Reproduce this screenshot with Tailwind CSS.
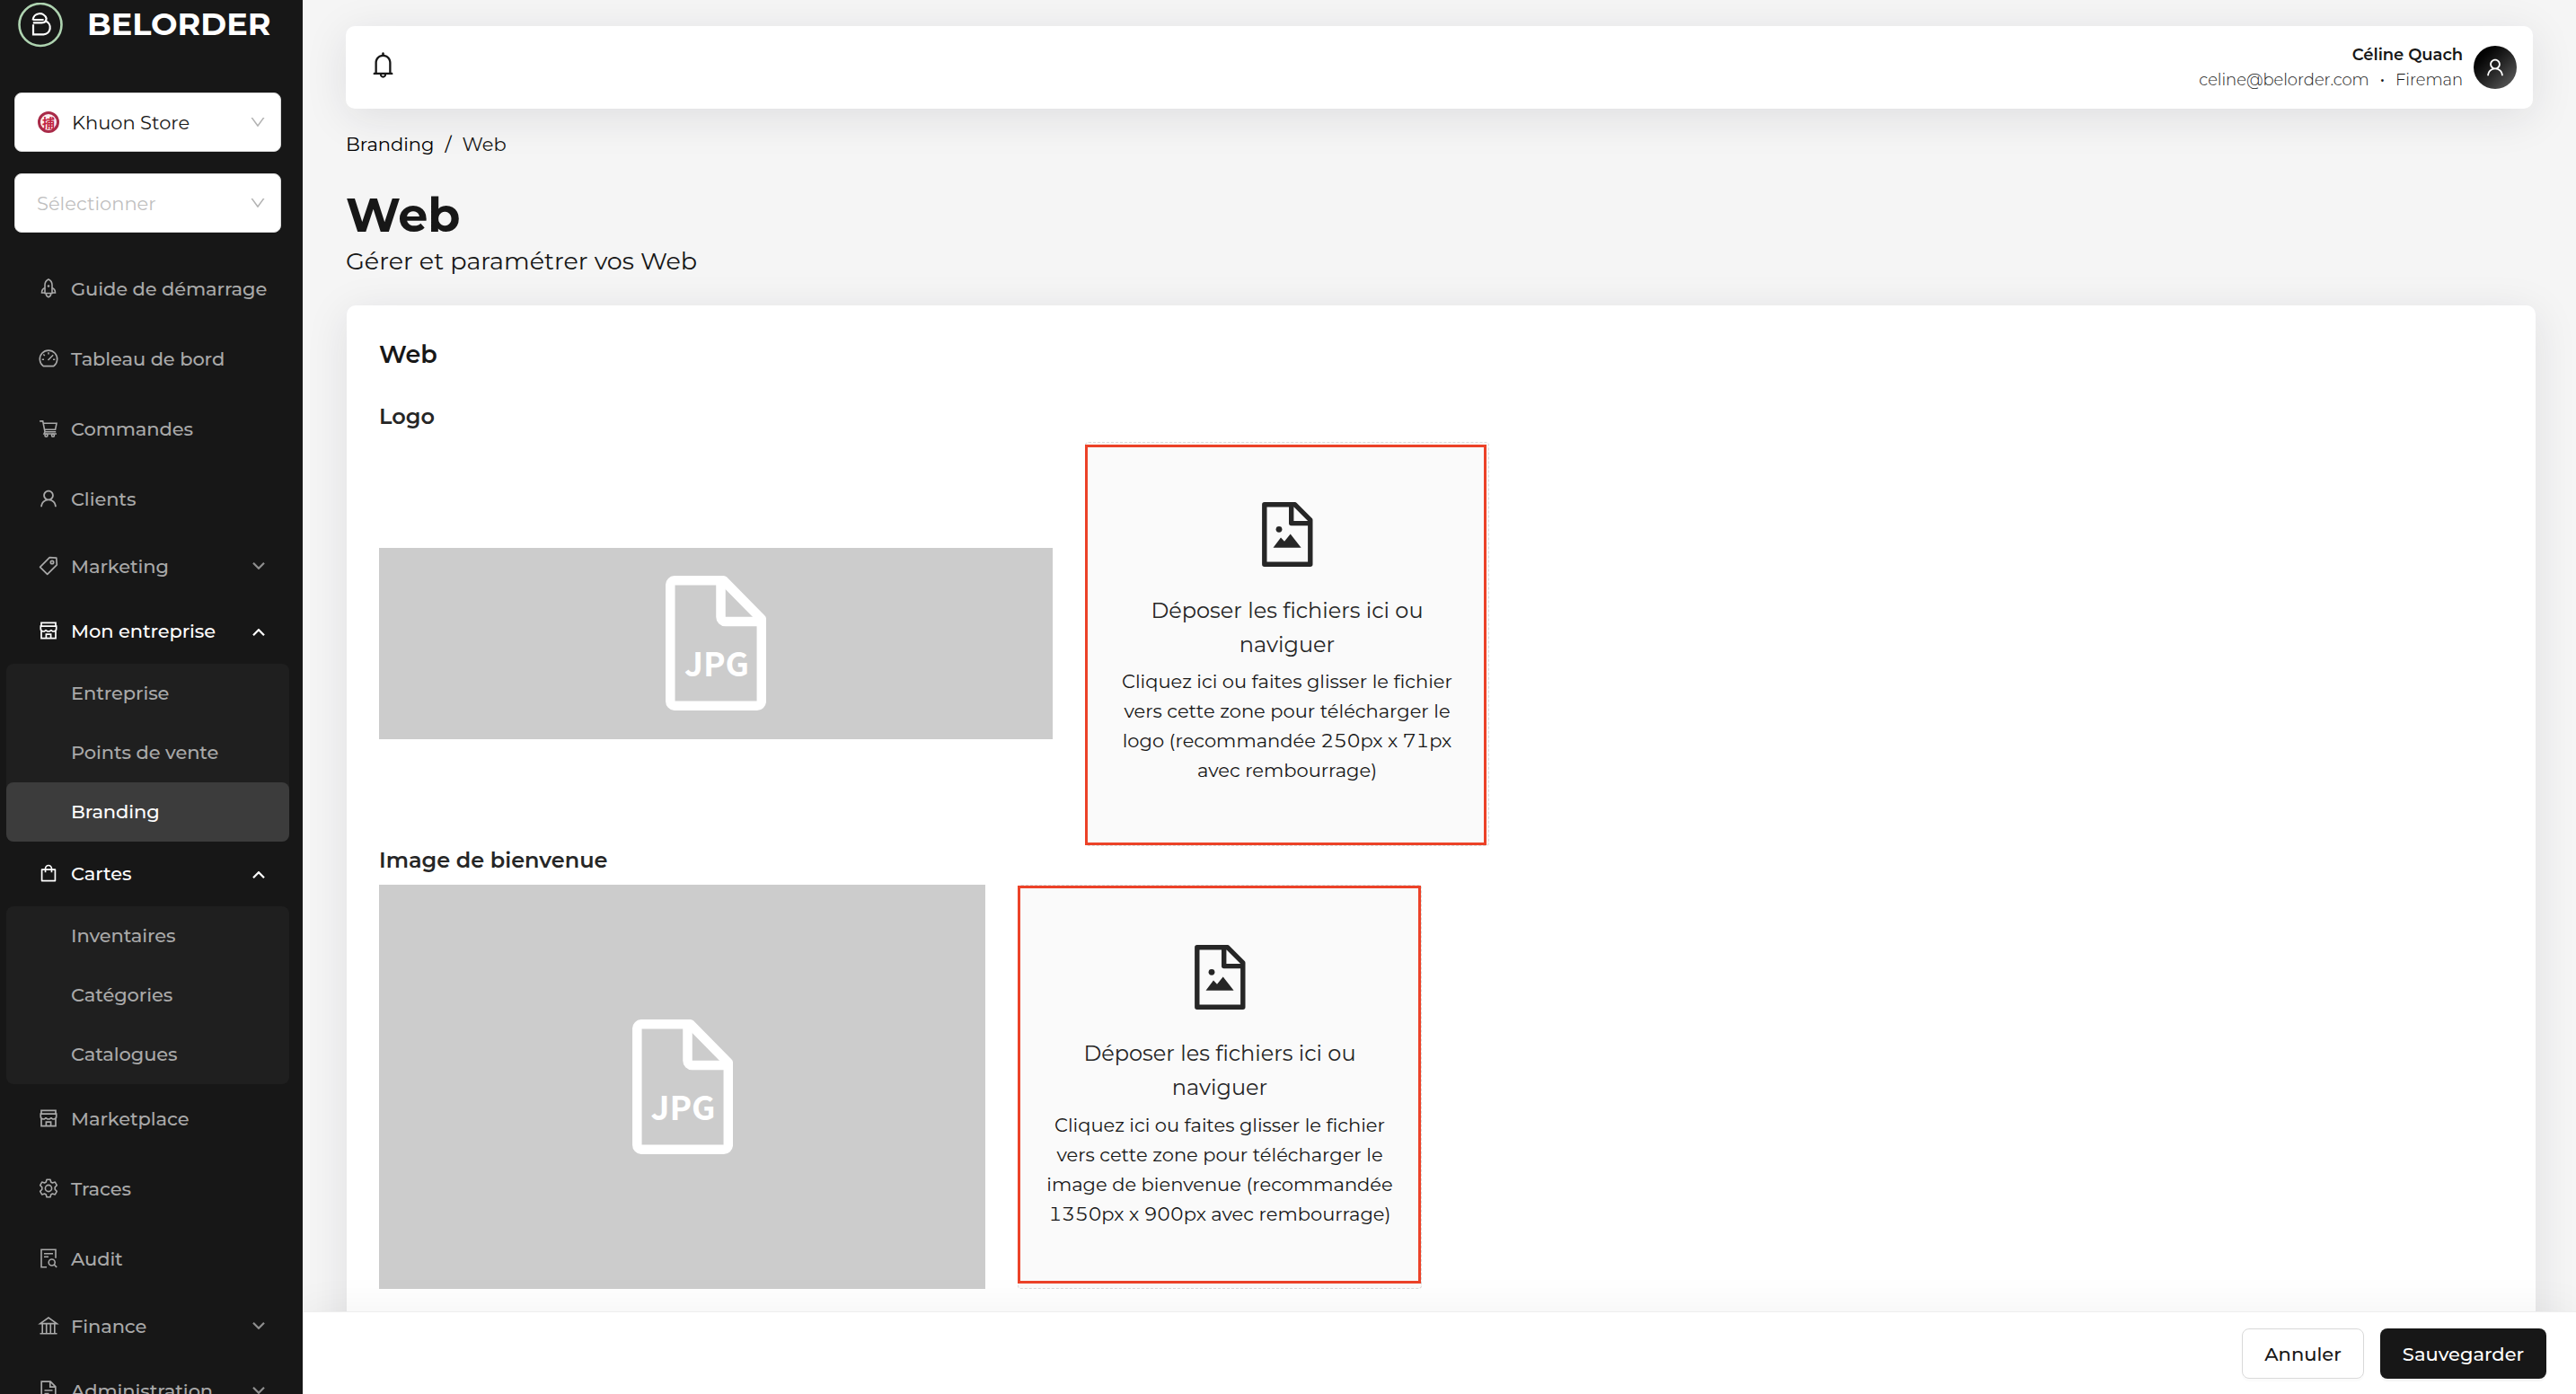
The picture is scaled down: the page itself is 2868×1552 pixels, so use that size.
<!DOCTYPE html>
<html lang="fr">
<head>
  <meta charset="UTF-8" />
  <meta name="viewport" content="width=device-width, initial-scale=1.0"/>
  <title>Belorder - Branding Web</title>
  <script src="https://cdn.jsdelivr.net/npm/@tailwindcss/browser@4"></script>
</head>
<body class="flex h-screen overflow-hidden bg-[#f5f5f5] font-['Montserrat','Inter',sans-serif] text-[21px] leading-[33px] text-[#171717] tabular-nums">

  <!-- Icons -->
  <svg class="hidden">
    <symbol id="i-user" viewBox="0 0 1024 1024"><path fill="currentColor" d="M858.5 763.6a374 374 0 00-80.6-119.5 375.63 375.63 0 00-119.5-80.6c-.4-.2-.8-.3-1.2-.5C719.5 518 760 444.7 760 362c0-137-111-248-248-248S264 225 264 362c0 82.7 40.5 156 102.8 201.1-.4.2-.8.3-1.2.5-44.8 18.9-85 46-119.5 80.6a375.63 375.63 0 00-80.6 119.5A371.7 371.7 0 00136 901.8a8 8 0 008 8.2h60c4.4 0 7.9-3.5 8-7.8 2-77.2 33-149.5 87.8-204.3 56.7-56.7 132-87.9 212.2-87.9s155.5 31.2 212.2 87.9C779 752.7 810 825 812 902.2c.1 4.4 3.6 7.8 8 7.8h60a8 8 0 008-8.2c-1-47.8-10.9-94.3-29.5-138.2zM512 534c-45.9 0-89.1-17.9-121.6-50.4S340 407.9 340 362c0-45.9 17.9-89.1 50.4-121.6S466.1 190 512 190s89.1 17.9 121.6 50.4S684 316.1 684 362c0 45.9-17.9 89.1-50.4 121.6S557.9 534 512 534z"/></symbol>
    <symbol id="i-down" viewBox="0 0 1024 1024"><path fill="currentColor" d="M884 256h-75c-5.1 0-9.9 2.5-12.9 6.6L512 654.2 227.9 262.6c-3-4.1-7.8-6.6-12.9-6.6h-75c-6.5 0-10.3 7.4-6.5 12.7l352.6 486.1c12.8 17.6 39 17.6 51.7 0l352.6-486.1c3.9-5.3.1-12.7-6.4-12.7z"/></symbol>
    <symbol id="i-bell" viewBox="0 0 1024 1024"><path fill="currentColor" d="M816 768h-24V428c0-141.1-104.3-257.7-240-277.1V112c0-22.1-17.9-40-40-40s-40 17.9-40 40v38.9c-135.7 19.4-240 136-240 277.1v340h-24c-17.7 0-32 14.3-32 32v32c0 4.4 3.6 8 8 8h216c0 61.8 50.2 112 112 112s112-50.2 112-112h216c4.4 0 8-3.6 8-8v-32c0-17.7-14.3-32-32-32zM512 888c-26.5 0-48-21.5-48-48h96c0 26.5-21.5 48-48 48zM304 768V428c0-55.6 21.6-107.8 60.9-147.1S456.4 220 512 220c55.6 0 107.8 21.6 147.1 60.9S720 372.4 720 428v340H304z"/></symbol>
    <symbol id="i-bag" viewBox="0 0 1024 1024"><path fill="currentColor" d="M832 312H696v-16c0-101.6-82.4-184-184-184s-184 82.4-184 184v16H192c-17.7 0-32 14.3-32 32v536c0 17.7 14.3 32 32 32h640c17.7 0 32-14.3 32-32V344c0-17.7-14.3-32-32-32zm-432-16c0-61.9 50.1-112 112-112s112 50.1 112 112v16H400v-16zm392 544H232V384h96v88c0 4.4 3.6 8 8 8h56c4.4 0 8-3.6 8-8v-88h224v88c0 4.4 3.6 8 8 8h56c4.4 0 8-3.6 8-8v-88h96v456z"/></symbol>
    <symbol id="i-rocket" viewBox="0 0 24 24"><g fill="none" stroke="currentColor" stroke-width="1.6"><path d="M8 17.5V8.2C8 5.4 9.6 3.2 12 2c2.4 1.2 4 3.4 4 6.2v9.3z"/><path d="M8 11.5c-2.2.8-3.5 2.8-3.5 5.5H8M16 11.5c2.2.8 3.5 2.8 3.5 5.5H16"/><path d="M9.2 17.5c0 2 1 3.6 2.8 4.3 1.8-.7 2.8-2.3 2.8-4.3"/></g><circle cx="12" cy="9.5" r="1.3" fill="currentColor"/></symbol>
    <symbol id="i-dash" viewBox="0 0 24 24"><g fill="none" stroke="currentColor" stroke-width="1.6"><path d="M6.2 20.6a9.7 9.7 0 1 1 11.6 0z" stroke-linejoin="round"/><path d="M12 5.2v2.4M6.3 7.5l1.5 1.5M4.7 13.2H7M17 13.2h2.3M11.500 14l5.700-5.700" stroke-width="1.5"/></g></symbol>
    <symbol id="i-cart" viewBox="0 0 24 24"><g fill="none" stroke="currentColor" stroke-width="1.6"><path d="M2.2 3.900h3.500l2.300 11.800h12.200M6.400 6.300h14.600l-1.400 7H7.600M8 15.700l-1 2.300h14"/><circle cx="9.500" cy="19.800" r="1.500"/><circle cx="17" cy="19.800" r="1.500"/></g></symbol>
    <symbol id="i-tag" viewBox="0 0 24 24"><g fill="none" stroke="currentColor" stroke-width="1.7"><path d="M2.600 13.300 13.200 2.700l7.600.5.500 7.600L10.700 21.400z" stroke-linejoin="round"/><circle cx="16" cy="8" r="1.700"/></g></symbol>
    <symbol id="i-shop" viewBox="0 0 24 24"><g fill="none" stroke="currentColor" stroke-width="1.7"><path d="M4 12.500v8.200h16v-8.200M4 7.500V3.400h16v4.100"/><path d="M3.300 7.200h17.400v2.900c0 1.700-1.300 2.900-2.900 2.900s-2.900-1.200-2.900-2c0 .8-1.300 2-2.900 2s-2.900-1.200-2.900-2c0 .8-1.300 2-2.900 2s-2.900-1.200-2.900-2.900z"/><path d="M9.400 20.700v-4.500h5.200v4.500"/></g></symbol>
    <symbol id="i-gear" viewBox="0 0 24 24"><g fill="none" stroke="currentColor" stroke-width="1.6"><path stroke-linejoin="round" d="M10 2.200h4l.7 2.800 1.700 1 2.900-.9 2 3.500-2.100 2.100v2.600l2.100 2.100-2 3.500-2.900-.9-1.700 1-.7 2.800h-4l-.7-2.800-1.700-1-2.900.9-2-3.500 2.100-2.100v-2.600L2.700 8.600l2-3.500 2.900.9 1.700-1z"/><circle cx="12" cy="12" r="3.600"/></g></symbol>
    <symbol id="i-audit" viewBox="0 0 24 24"><g fill="none" stroke="currentColor" stroke-width="1.6"><path d="M10 21.800H4V2.200h16v9.600M7 6.800h10M7 10.200h5"/><circle cx="15.700" cy="16.500" r="3.500"/><path d="m18.200 19 3 2.800"/></g></symbol>
    <symbol id="i-bank" viewBox="0 0 24 24"><g fill="none" stroke="currentColor" stroke-width="1.6"><path d="M2.700 9.600 12 3l9.300 6.600zM2.500 20.700h19M5.200 9.600v11M9.700 9.600v11M14.300 9.600v11M18.800 9.600v11"/></g></symbol>
    <symbol id="i-file" viewBox="0 0 24 24"><g fill="none" stroke="currentColor" stroke-width="1.7"><path d="M4.200 22V2.200h10l5.600 5.600V22zM13.800 2.500v5.700h5.700M7.500 12h9M7.500 15.500h5"/></g></symbol>
    <symbol id="i-image" viewBox="0 0 57 72"><g fill="none" stroke="currentColor" stroke-width="5.4" stroke-linejoin="round"><path d="M2.800 2.800h34L53.800 19.900v49.300H2.800z"/><path d="M32.700 3v20.600h21"/></g><g fill="currentColor"><circle cx="19" cy="30.300" r="3.400"/><path d="M12.500 50.800 21 39.500l4 4.300 6.700-8.300 11.900 15.300z"/></g></symbol>
    <symbol id="i-doc" viewBox="0 0 112 150"><g fill="none" stroke="#fff" stroke-width="10.5" stroke-linejoin="round"><path d="M10 5.300h54.500l42.300 43V140a5 5 0 0 1-5 4.700H10a5 5 0 0 1-4.700-5V10a5 5 0 0 1 4.700-4.700z"/><path d="M61.500 6v40a5 5 0 0 0 5 5h40"/></g></symbol>
  </svg>

  <!-- Sidebar -->
  <aside class="flex h-screen w-[337px] shrink-0 flex-col overflow-hidden bg-[#171717] text-[#a9a9a9]">
    <div class="flex h-[55px] shrink-0 items-center gap-[27px] pl-5 text-white">
      <svg class="size-[50px]" viewBox="0 0 50 50" fill="none">
        <circle cx="25" cy="24.500" r="23.500" stroke="#aed3b0" stroke-width="2.600"/>
        <path d="M16.600 19.400A7.700 7.700 0 0 1 31.600 17.500c0 3.500-2.300 4.800-5.200 4.800h-9.600M16.600 19h12M17 24.200v11.200h11.500a7.700 7.700 0 0 0 2.500-14.800" stroke="#fff" stroke-width="2.200"/>
      </svg>
      <span class="pb-[2px] text-[35px] font-bold">BELORDER</span>
    </div>

    <div class="mr-6 ml-4 mt-12 flex h-[66px] shrink-0 items-center rounded-lg border border-[#d9d9d9] bg-white pr-[15px] pl-[25px] text-[#171717]">
      <span class="mr-[14px] flex size-6 items-center justify-center rounded-full border-[3px] border-[#a92a48] bg-[#fbeef0] font-['Noto_Sans_CJK_TC',sans-serif] text-[14px] leading-none font-bold text-[#c21f3f]">捕</span>
      <span class="flex-1">Khuon Store</span>
      <svg class="size-5 text-black/30"><use href="#i-down"/></svg>
    </div>
    <div class="mr-6 ml-4 mt-6 flex h-[66px] shrink-0 items-center rounded-lg border border-[#d9d9d9] bg-white pr-[15px] pl-6 text-[#bfbfbf]">
      <span class="flex-1">Sélectionner</span>
      <svg class="size-5 text-black/30"><use href="#i-down"/></svg>
    </div>

    <nav class="mt-6 font-medium tracking-[-0.1px]">
      <a class="flex h-[78px] items-center gap-[13px] pb-[2px] pl-[42px]"><svg class="size-6"><use href="#i-rocket"/></svg>Guide de démarrage</a>
      <a class="flex h-[78px] items-center gap-[13px] pb-[2px] pl-[42px]"><svg class="size-6"><use href="#i-dash"/></svg>Tableau de bord</a>
      <a class="flex h-[78px] items-center gap-[13px] pb-[2px] pl-[42px]"><svg class="size-6"><use href="#i-cart"/></svg>Commandes</a>
      <a class="flex h-[78px] items-center gap-[13px] pb-[2px] pl-[42px]"><svg class="size-6"><use href="#i-user"/></svg>Clients</a>
      <a class="flex h-[72px] items-center gap-[13px] pr-[42px] pb-[2px] pl-[42px]"><svg class="size-6"><use href="#i-tag"/></svg><span class="flex-1">Marketing</span>
        <svg class="h-2 w-[14px]" viewBox="0 0 14 8" fill="none" stroke="#8f8f8f" stroke-width="2.2"><path d="m1 .8 6 6 6-6"/></svg></a>
      <a class="flex h-[72px] items-center gap-[13px] pr-[42px] pb-[2px] pl-[42px] text-white"><svg class="size-6"><use href="#i-shop"/></svg><span class="flex-1">Mon entreprise</span>
        <svg class="mt-1 h-2 w-[14px]" viewBox="0 0 14 8" fill="none" stroke="#fff" stroke-width="2.2"><path d="m1 7.200 6-6 6 6"/></svg></a>
      <div class="mr-[15px] ml-[7px] rounded-lg bg-[#1f1f1f]">
        <a class="flex h-[66px] items-center pb-[2px] pl-[72px]">Entreprise</a>
        <a class="flex h-[66px] items-center pb-[2px] pl-[72px]">Points de vente</a>
        <a class="flex h-[66px] items-center rounded-lg bg-[#3c3c3c] pb-[2px] pl-[72px] text-white">Branding</a>
      </div>
      <a class="flex h-[72px] items-center gap-[13px] pr-[42px] pb-[2px] pl-[42px] text-white"><svg class="size-6"><use href="#i-bag"/></svg><span class="flex-1">Cartes</span>
        <svg class="mt-1 h-2 w-[14px]" viewBox="0 0 14 8" fill="none" stroke="#fff" stroke-width="2.2"><path d="m1 7.200 6-6 6 6"/></svg></a>
      <div class="mr-[15px] ml-[7px] rounded-lg bg-[#1f1f1f]">
        <a class="flex h-[66px] items-center pb-[2px] pl-[72px]">Inventaires</a>
        <a class="flex h-[66px] items-center pb-[2px] pl-[72px]">Catégories</a>
        <a class="flex h-[66px] items-center pb-[2px] pl-[72px]">Catalogues</a>
      </div>
      <a class="flex h-[78px] items-center gap-[13px] pb-[2px] pl-[42px]"><svg class="size-6"><use href="#i-shop"/></svg>Marketplace</a>
      <a class="flex h-[78px] items-center gap-[13px] pb-[2px] pl-[42px]"><svg class="size-6"><use href="#i-gear"/></svg>Traces</a>
      <a class="flex h-[78px] items-center gap-[13px] pb-[2px] pl-[42px]"><svg class="size-6"><use href="#i-audit"/></svg>Audit</a>
      <a class="flex h-[72px] items-center gap-[13px] pr-[42px] pb-[2px] pl-[42px]"><svg class="size-6"><use href="#i-bank"/></svg><span class="flex-1">Finance</span>
        <svg class="h-2 w-[14px]" viewBox="0 0 14 8" fill="none" stroke="#8f8f8f" stroke-width="2.2"><path d="m1 .8 6 6 6-6"/></svg></a>
      <a class="flex h-[72px] items-center gap-[13px] pr-[42px] pb-[2px] pl-[42px]"><svg class="size-6"><use href="#i-file"/></svg><span class="flex-1">Administration</span>
        <svg class="h-2 w-[14px]" viewBox="0 0 14 8" fill="none" stroke="#8f8f8f" stroke-width="2.2"><path d="m1 .8 6 6 6-6"/></svg></a>
    </nav>
  </aside>

  <!-- Page -->
  <div class="flex min-w-0 flex-1 flex-col overflow-hidden">
    <main class="min-h-0 flex-1 overflow-hidden pt-[29px]">
      <header class="mr-12 ml-12 flex h-[92px] items-center justify-between rounded-[10px] bg-white pr-[18px] pl-[25px] shadow-[0_9px_48px_rgba(30,30,50,0.1)]">
        <svg class="size-[33px] -translate-y-[3px]"><use href="#i-bell"/></svg>
        <div class="flex items-center gap-3">
          <div class="text-right text-[18px] leading-7 tracking-[-0.05px]">
            <p class="font-semibold">Céline Quach</p>
            <p class="flex justify-end font-light"><span>celine@belorder.com</span><span class="mx-[12px] font-normal">•</span><span>Fireman</span></p>
          </div>
          <span class="flex size-12 items-center justify-center rounded-full bg-linear-to-br from-black to-[#666] text-white"><svg class="size-6"><use href="#i-user"/></svg></span>
        </div>
      </header>

      <div class="mt-[23px] ml-12 flex text-black"><span>Branding</span><span class="mx-3">/</span><span class="text-[#171717]">Web</span></div>
      <h1 class="mt-[30px] ml-12 text-[52.5px] leading-[64px] font-bold">Web</h1>
      <p class="-mt-px ml-12 text-[27px] leading-[42px]">Gérer et paramétrer vos Web</p>

      <section class="mt-7 mr-[45px] ml-[49px] h-[1300px] rounded-[10px] bg-white px-9 pt-[34px] shadow-[0_9px_48px_rgba(30,30,50,0.1)]">
        <h2 class="text-[27px] leading-[42px] font-semibold">Web</h2>
        <h3 class="mt-[29px] text-[24px] leading-[38px] font-semibold text-[#262626]">Logo</h3>
        <div class="mt-[9px] flex items-center gap-9">
          <div class="mb-[2px] flex h-[213px] w-[750px] items-center justify-center bg-[#ccc]">
            <div class="relative h-[150px] w-[112px]">
              <svg class="size-full"><use href="#i-doc"/></svg>
              <span class="absolute top-[76px] left-px w-full text-center font-['Noto_Sans_CJK_SC',sans-serif] text-[37px] leading-[40px] font-bold text-white">JPG</span>
            </div>
          </div>
          <div class="relative flex size-[450px] flex-col items-center rounded-sm border border-dashed border-[#d9d9d9] bg-[#fafafa] px-6 pt-[66px] text-center">
            <svg class="h-[72px] w-[57px] text-[#262626]"><use href="#i-image"/></svg>
            <p class="mt-[30px] px-8 text-[24px] leading-[38px] text-[#262626]">Déposer les fichiers ici ou naviguer</p>
            <p class="mt-[5px]">Cliquez ici ou faites glisser le fichier vers cette zone pour télécharger le logo (recommandée 250px x 71px avec rembourrage)</p>
            <span class="absolute top-[2px] -left-px h-[446px] w-[447px] border-[3px] border-[#ec4228]"></span>
          </div>
        </div>
        <h3 class="text-[24px] leading-[31px] font-semibold text-[#262626]">Image de bienvenue</h3>
        <div class="mt-3 flex items-center gap-9">
          <div class="flex h-[450px] w-[675px] items-center justify-center bg-[#ccc]">
            <div class="relative h-[150px] w-[112px]">
              <svg class="size-full"><use href="#i-doc"/></svg>
              <span class="absolute top-[76px] left-px w-full text-center font-['Noto_Sans_CJK_SC',sans-serif] text-[37px] leading-[40px] font-bold text-white">JPG</span>
            </div>
          </div>
          <div class="relative flex size-[450px] flex-col items-center rounded-sm border border-dashed border-[#d9d9d9] bg-[#fafafa] px-6 pt-[66px] text-center">
            <svg class="h-[72px] w-[57px] text-[#262626]"><use href="#i-image"/></svg>
            <p class="mt-[30px] px-8 text-[24px] leading-[38px] text-[#262626]">Déposer les fichiers ici ou naviguer</p>
            <p class="mt-[6px]">Cliquez ici ou faites glisser le fichier vers cette zone pour télécharger le image de bienvenue (recommandée 1350px x 900px avec rembourrage)</p>
            <span class="absolute top-0 -left-px h-[443px] w-[449px] border-[3px] border-[#ec4228]"></span>
          </div>
        </div>
      </section>
    </main>

    <!-- Actions -->
    <footer class="z-10 flex h-[92px] shrink-0 items-start justify-end gap-[18px] border-t border-[#eee] bg-white pt-[18px] pr-[33px] font-medium shadow-[0_0_48px_rgba(0,0,0,0.06)]">
      <button class="h-14 w-[136px] rounded-lg border border-[#d9d9d9] shadow-[0_3px_0_rgba(0,0,0,0.015)]">Annuler</button>
      <button class="h-14 w-[185px] rounded-lg bg-[#171717] text-white shadow-[0_3px_0_rgba(0,0,0,0.04)]">Sauvegarder</button>
    </footer>
  </div>

</body>
</html>
